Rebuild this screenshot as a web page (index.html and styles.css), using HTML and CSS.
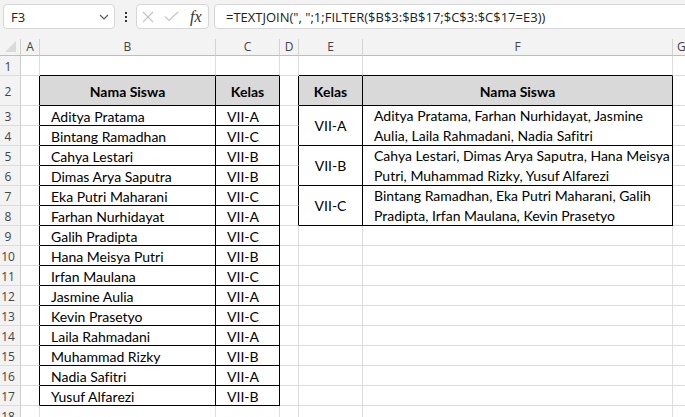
FILE: index.html
```html
<!DOCTYPE html>
<html>
<head>
<meta charset="utf-8">
<link rel="stylesheet" href="styles.css">
</head>
<body>
<div class="topbar">
  <div class="namebox">
    <span class="nb-text">F3</span>
    <svg class="chev" width="10" height="6" viewBox="0 0 10 6"><path d="M1 1 L5 5 L9 1" fill="none" stroke="#555" stroke-width="1.1"/></svg>
  </div>
  <div class="dots"><i></i><i></i><i></i></div>
  <div class="fbtns">
    <svg width="12" height="12" viewBox="0 0 12 12"><path d="M1 1 L11 11 M11 1 L1 11" stroke="#c4c4c4" stroke-width="1.2" fill="none"/></svg>
    <svg width="15" height="11" viewBox="0 0 15 11"><path d="M1 5.5 L5 9.5 L14 1" stroke="#c4c4c4" stroke-width="1.2" fill="none"/></svg>
    <span class="fx">fx</span>
  </div>
  <div class="formula">=TEXTJOIN(", ";1;FILTER($B$3:$B$17;$C$3:$C$17=E3))</div>
</div>
<div class="sheet">
  <!-- header row -->
  <div class="corner"><svg width="12" height="12" viewBox="0 0 12 12"><path d="M11 0 L11 11 L0 11 Z" fill="#dadada"/></svg></div>
  <div class="ch">A</div><div class="ch">B</div><div class="ch">C</div><div class="ch">D</div><div class="ch">E</div><div class="ch">F</div><div class="ch chg">G</div>

  <!-- row 1 -->
  <div class="rh">1</div><div class="c"></div><div class="c kb"></div><div class="c kb"></div><div class="c"></div><div class="c kb"></div><div class="c kb"></div><div class="c"></div>

  <!-- row 2 -->
  <div class="rh">2</div><div class="c kr"></div><div class="c kr kb th">Nama Siswa</div><div class="c kr kb th">Kelas</div><div class="c kr"></div><div class="c kr kb th">Kelas</div><div class="c kr kb th">Nama Siswa</div><div class="c"></div>

  <!-- row 3 -->
  <div class="rh">3</div><div class="c kr"></div><div class="c kr kb in">Aditya Pratama</div><div class="c kr kb in">VII-A</div><div class="c kr"></div>
  <div class="c kr kb mid tall">VII-A</div>
  <div class="c kr kb tall wrap"><span>Aditya Pratama, Farhan Nurhidayat, Jasmine</span><span>Aulia, Laila Rahmadani, Nadia Safitri</span></div>
  <div class="c"></div>

  <!-- row 4 -->
  <div class="rh">4</div><div class="c kr"></div><div class="c kr kb in">Bintang Ramadhan</div><div class="c kr kb in">VII-C</div><div class="c kr"></div><div class="c"></div>

  <!-- row 5 -->
  <div class="rh">5</div><div class="c kr"></div><div class="c kr kb in">Cahya Lestari</div><div class="c kr kb in">VII-B</div><div class="c kr"></div>
  <div class="c kr kb mid tall">VII-B</div>
  <div class="c kr kb tall wrap"><span>Cahya Lestari, Dimas Arya Saputra, Hana Meisya</span><span>Putri, Muhammad Rizky, Yusuf Alfarezi</span></div>
  <div class="c"></div>

  <!-- row 6 -->
  <div class="rh">6</div><div class="c kr"></div><div class="c kr kb in">Dimas Arya Saputra</div><div class="c kr kb in">VII-B</div><div class="c kr"></div><div class="c"></div>

  <!-- row 7 -->
  <div class="rh">7</div><div class="c kr"></div><div class="c kr kb in">Eka Putri Maharani</div><div class="c kr kb in">VII-C</div><div class="c kr"></div>
  <div class="c kr kb mid tall">VII-C</div>
  <div class="c kr kb tall wrap"><span>Bintang Ramadhan, Eka Putri Maharani, Galih</span><span>Pradipta, Irfan Maulana, Kevin Prasetyo</span></div>
  <div class="c"></div>

  <!-- row 8 -->
  <div class="rh">8</div><div class="c kr"></div><div class="c kr kb in">Farhan Nurhidayat</div><div class="c kr kb in">VII-A</div><div class="c kr"></div><div class="c"></div>

  <!-- rows 9-17 -->
  <div class="rh">9</div><div class="c kr"></div><div class="c kr kb in">Galih Pradipta</div><div class="c kr kb in">VII-C</div><div class="c"></div><div class="c"></div><div class="c"></div><div class="c"></div>
  <div class="rh">10</div><div class="c kr"></div><div class="c kr kb in">Hana Meisya Putri</div><div class="c kr kb in">VII-B</div><div class="c"></div><div class="c"></div><div class="c"></div><div class="c"></div>
  <div class="rh">11</div><div class="c kr"></div><div class="c kr kb in">Irfan Maulana</div><div class="c kr kb in">VII-C</div><div class="c"></div><div class="c"></div><div class="c"></div><div class="c"></div>
  <div class="rh">12</div><div class="c kr"></div><div class="c kr kb in">Jasmine Aulia</div><div class="c kr kb in">VII-A</div><div class="c"></div><div class="c"></div><div class="c"></div><div class="c"></div>
  <div class="rh">13</div><div class="c kr"></div><div class="c kr kb in">Kevin Prasetyo</div><div class="c kr kb in">VII-C</div><div class="c"></div><div class="c"></div><div class="c"></div><div class="c"></div>
  <div class="rh">14</div><div class="c kr"></div><div class="c kr kb in">Laila Rahmadani</div><div class="c kr kb in">VII-A</div><div class="c"></div><div class="c"></div><div class="c"></div><div class="c"></div>
  <div class="rh">15</div><div class="c kr"></div><div class="c kr kb in">Muhammad Rizky</div><div class="c kr kb in">VII-B</div><div class="c"></div><div class="c"></div><div class="c"></div><div class="c"></div>
  <div class="rh">16</div><div class="c kr"></div><div class="c kr kb in">Nadia Safitri</div><div class="c kr kb in">VII-A</div><div class="c"></div><div class="c"></div><div class="c"></div><div class="c"></div>
  <div class="rh">17</div><div class="c kr"></div><div class="c kr kb in">Yusuf Alfarezi</div><div class="c kr kb in">VII-B</div><div class="c"></div><div class="c"></div><div class="c"></div><div class="c"></div>
  <div class="rh">18</div><div class="c"></div><div class="c"></div><div class="c"></div><div class="c"></div><div class="c"></div><div class="c"></div><div class="c"></div>
</div>
</body>
</html>
```
FILE: styles.css
```css
html, body {
  margin: 0;
  padding: 0;
  width: 685px;
  height: 417px;
  overflow: hidden;
  background: #ffffff;
}

.topbar {
  height: 39px;
  box-sizing: border-box;
  background: #f3f3f3;
  display: flex;
  align-items: flex-start;
  padding: 4px 0 0 3px;
  font-family: "Open Sans", "Noto Sans", sans-serif;
  color: #222;
}

.namebox {
  width: 112px;
  height: 25px;
  box-sizing: border-box;
  background: #fff;
  border: 1px solid #d6d6d6;
  border-radius: 4px;
  display: flex;
  align-items: center;
  justify-content: space-between;
  padding: 0 5px 0 7px;
  font-size: 13px;
}

.chev {
  display: block;
}

.dots {
  width: 21px;
  height: 25px;
  display: flex;
  flex-direction: column;
  align-items: center;
  justify-content: center;
  gap: 2px;
}

.dots i {
  display: block;
  width: 2px;
  height: 2px;
  background: #333;
}

.fbtns {
  width: 73px;
  height: 25px;
  box-sizing: border-box;
  background: #fff;
  border: 1px solid #d6d6d6;
  border-radius: 4px;
  display: flex;
  align-items: center;
  padding: 0 0 0 5px;
  gap: 10px;
}

.fbtns svg {
  display: block;
}

.fx {
  font-family: "Liberation Serif", "DejaVu Serif", serif;
  font-style: italic;
  font-size: 16px;
  color: #333;
  margin-left: 1px;
}

.formula {
  flex: 1;
  margin-left: 5px;
  margin-right: -12px;
  height: 25px;
  box-sizing: border-box;
  background: #fff;
  border: 1px solid #d6d6d6;
  border-radius: 4px;
  display: flex;
  align-items: center;
  padding-left: 11px;
  font-size: 13px;
  white-space: nowrap;
}

.sheet {
  display: grid;
  grid-template-columns: 21px 19px 176px 64px 19px 64px 310px 1fr;
  grid-template-rows: 17px 20px 30px repeat(16, 20px);
  font-family: "Lato", "Liberation Sans", sans-serif;
  font-size: 14px;
  font-variant-ligatures: none;
  color: #000;
}

.corner {
  background: #f3f3f3;
  border-right: 1px solid #cfcfcf;
  border-bottom: 1px solid #bdbdbd;
  box-sizing: border-box;
  display: flex;
  align-items: flex-end;
  justify-content: flex-end;
  padding: 0 3px 2px 0;
}

.corner svg {
  display: block;
}

.ch {
  background: #f3f3f3;
  border-right: 1px solid #d4d4d4;
  border-bottom: 1px solid #bdbdbd;
  box-sizing: border-box;
  display: flex;
  align-items: center;
  justify-content: center;
  font-family: "Open Sans", "Noto Sans", sans-serif;
  font-size: 12px;
  color: #444;
  padding-bottom: 1px;
}

.chg {
  justify-content: flex-start;
  padding-left: 4px;
  border-right: none;
}

.rh {
  background: #f3f3f3;
  border-right: 1px solid #cfcfcf;
  border-bottom: 1px solid #dcdcdc;
  box-sizing: border-box;
  display: flex;
  align-items: center;
  justify-content: center;
  font-family: "Open Sans", "Noto Sans", sans-serif;
  font-size: 12px;
  color: #444;
  padding: 2px 4px 0 0;
}

.c {
  border-right: 1px solid #dcdcdc;
  border-bottom: 1px solid #dcdcdc;
  box-sizing: border-box;
  display: flex;
  align-items: center;
  white-space: nowrap;
  overflow: hidden;
  padding-top: 2px;
}

.kb {
  border-bottom-color: #000;
}

.kr {
  border-right-color: #000;
}

.th {
  background: #d9d9d9;
  font-weight: bold;
  justify-content: center;
}

.in {
  padding-left: 11px;
}

.mid {
  justify-content: center;
  padding-top: 0;
}

.tall {
  grid-row: span 2;
}

.wrap {
  flex-direction: column;
  align-items: flex-start;
  justify-content: flex-start;
  padding: 0 0 0 11px;
  line-height: 20px;
}
```
